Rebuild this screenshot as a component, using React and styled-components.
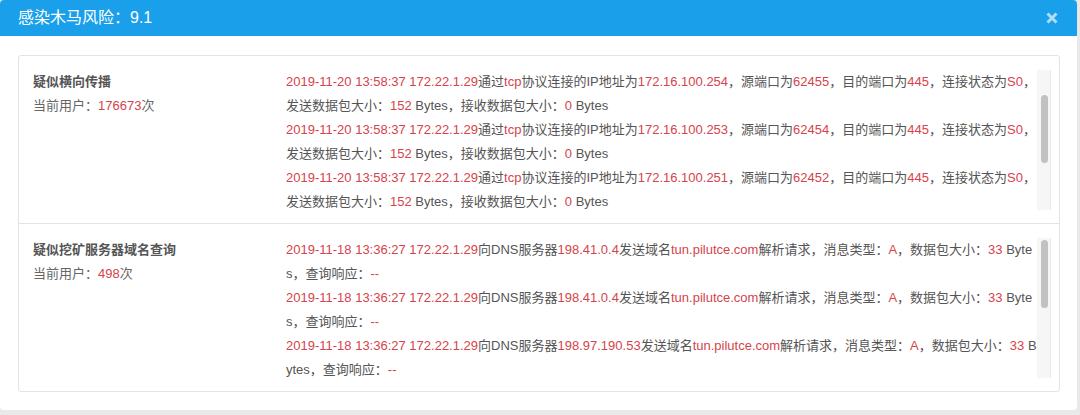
import React, { useEffect, useRef, useState } from 'react';
import styled, { createGlobalStyle } from 'styled-components';

const GlobalStyle = createGlobalStyle`
  html, body {
    margin: 0;
    padding: 0;
    background: #e9e9e9;
  }
  body {
    font-family: "Liberation Sans", "Noto Sans CJK SC", sans-serif;
  }
`;

const Modal = styled.div`
  width: 1077px;
  height: 410px;
  background: #fff;
  border-radius: 4px;
  overflow: hidden;
  display: flex;
  flex-direction: column;
`;

const Header = styled.div`
  height: 36px;
  flex-shrink: 0;
  background: #1aa0ea;
  display: flex;
  align-items: center;
  justify-content: space-between;
  padding: 0 18px;
`;

const Title = styled.h2`
  margin: 0;
  font-size: 16px;
  font-weight: normal;
  color: #fff;
  line-height: 36px;
`;

const Close = styled.button`
  border: 0;
  background: none;
  padding: 0;
  width: 12px;
  height: 12px;
  display: flex;
  cursor: pointer;
  margin-right: 1px;
`;

const Body = styled.div`
  padding: 19px 17px 0 18px;
`;

const Card = styled.div`
  border: 1px solid #e3e3e3;
  border-radius: 3px;
`;

const Row = styled.div`
  display: flex;
  padding: 14px 8px 13px 14px;
  border-top: ${({ first }) => (first ? 'none' : '1px solid #e3e3e3')};
`;

const Side = styled.div`
  width: 253px;
  flex-shrink: 0;
  font-size: 13px;
  line-height: 24px;
`;

const SideTitle = styled.div`
  font-weight: bold;
  color: #555;
`;

const SideMeta = styled.div`
  color: #666;
`;

const Red = styled.span`
  color: #d6434b;
`;

const LogBox = styled.div`
  display: flex;
  height: 140px;
`;

const LogView = styled.div`
  width: 751px;
  height: 100%;
  overflow-y: auto;
  font-size: 13px;
  line-height: 24px;
  color: #555;
  word-break: break-all;
  scrollbar-width: none;

  &::-webkit-scrollbar {
    display: none;
  }
`;

const Track = styled.div`
  position: relative;
  width: 14px;
  background: #f6f6f6;
  border-right: 1px solid #ececec;
  box-sizing: border-box;
`;

const Thumb = styled.div`
  position: absolute;
  left: 4px;
  width: 7px;
  border-radius: 4px;
  background: #c1c1c1;
`;

const Entry = styled.div``;

const CloseIcon = () => (
  <svg width="12" height="12" viewBox="0 0 12 12">
    <path d="M1.5 1.5 L10.5 10.5 M10.5 1.5 L1.5 10.5" stroke="#afdcf7" strokeWidth="3" />
  </svg>
);

const ScrollLog = ({ start = 0, children }) => {
  const ref = useRef(null);
  const [bar, setBar] = useState({ top: 0, height: 0 });

  const measure = () => {
    const el = ref.current;
    if (!el) return;
    const ratio = el.clientHeight / el.scrollHeight;
    setBar({ top: el.scrollTop * ratio, height: el.clientHeight * ratio });
  };

  useEffect(() => {
    if (ref.current) ref.current.scrollTop = start;
    measure();
  }, [start]);

  return (
    <LogBox>
      <LogView ref={ref} onScroll={measure}>
        {children}
      </LogView>
      <Track>
        <Thumb style={{ top: bar.top + 2, height: bar.height }} />
      </Track>
    </LogBox>
  );
};

const tcpLogs = [
  ['172.16.100.255', '62456'],
  ['172.16.100.254', '62455'],
  ['172.16.100.253', '62454'],
  ['172.16.100.251', '62452'],
  ['172.16.100.250', '62451'],
  ['172.16.100.249', '62450'],
];

const dnsLogs = ['198.41.0.4', '198.41.0.4', '198.97.190.53', '198.97.190.53', '198.41.0.4', '198.97.190.53'];

const TcpEntry = ({ ip, port }) => (
  <Entry>
    <Red>2019-11-20 13:58:37 172.22.1.29</Red>通过<Red>tcp</Red>协议连接的IP地址为<Red>{ip}</Red>，源端口为
    <Red>{port}</Red>，目的端口为<Red>445</Red>，连接状态为<Red>S0</Red>，发送数据包大小：<Red>152</Red> Bytes，接收数据包大小：
    <Red>0</Red> Bytes
  </Entry>
);

const DnsEntry = ({ server }) => (
  <Entry>
    <Red>2019-11-18 13:36:27 172.22.1.29</Red>向DNS服务器<Red>{server}</Red>发送域名<Red>tun.pilutce.com</Red>
    解析请求，消息类型：<Red>A</Red>，数据包大小：<Red>33</Red> Bytes，查询响应：<Red>--</Red>
  </Entry>
);

export default function App() {
  return (
    <>
      <GlobalStyle />
      <Modal>
        <Header>
          <Title>感染木马风险：9.1</Title>
          <Close aria-label="关闭">
            <CloseIcon />
          </Close>
        </Header>
        <Body>
          <Card>
            <Row first>
              <Side>
                <SideTitle>疑似横向传播</SideTitle>
                <SideMeta>
                  当前用户：<Red>176673</Red>次
                </SideMeta>
              </Side>
              <ScrollLog start={48}>
                {tcpLogs.map(([ip, port], i) => (
                  <TcpEntry key={i} ip={ip} port={port} />
                ))}
              </ScrollLog>
            </Row>
            <Row>
              <Side>
                <SideTitle>疑似挖矿服务器域名查询</SideTitle>
                <SideMeta>
                  当前用户：<Red>498</Red>次
                </SideMeta>
              </Side>
              <ScrollLog>
                {dnsLogs.map((server, i) => (
                  <DnsEntry key={i} server={server} />
                ))}
              </ScrollLog>
            </Row>
          </Card>
        </Body>
      </Modal>
    </>
  );
}
